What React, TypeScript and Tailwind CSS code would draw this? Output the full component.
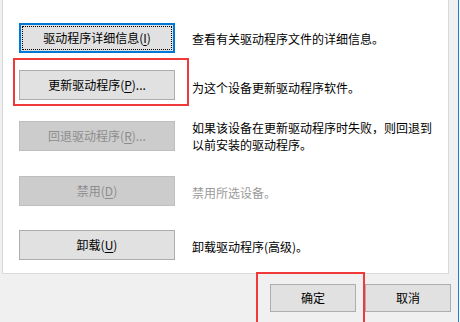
import React from 'react';

const font = "font-['Microsoft_YaHei','Noto_Sans_CJK_SC',sans-serif]";

function Mn({ k }: { k: string }) {
  return <span className="underline underline-offset-2">{k}</span>;
}

export default function App() {
  const btn = 'w-[156px] h-[30px] flex items-center justify-center text-[12px] leading-none box-border';
  const normal = 'bg-[#e1e1e1] border border-[#adadad] text-black';
  const disabled = 'bg-[#cccccc] border border-[#bfbfbf] text-[#8c8c8c]';

  return (
    <div className={`relative w-[460px] h-[322px] bg-[#f0f0f0] flex overflow-hidden ${font}`}>
      <div className="w-[458px] flex flex-col pl-[2px]">
        {/* property page */}
        <div className="w-[447px] h-[274px] bg-white border-x border-b border-[#d9d9d9] flex flex-col pl-4 pt-[23px]">
          <div className="flex items-center">
            <div className={`${btn} bg-[#e1e1e1] border-2 border-[#0078d7] p-px`}>
              <div className="w-full h-full outline outline-1 outline-dotted outline-black -outline-offset-1 flex items-center justify-center text-black">
                驱动程序详细信息(<Mn k="I" />)
              </div>
            </div>
            <p className="ml-[17px] text-[12px] leading-[17px] text-black">查看有关驱动程序文件的详细信息。</p>
          </div>

          <div className="flex items-center mt-[17px]">
            <div className="relative">
              <div className={`${btn} ${normal}`}>
                更新驱动程序(<Mn k="P" />)...
              </div>
              <div className="absolute left-[-6px] top-[-12px] w-[176px] h-[48px] border-2 border-[#f03a3a]" />
            </div>
            <p className="ml-[17px] pt-[4px] text-[12px] leading-[17px] text-black">为这个设备更新驱动程序软件。</p>
          </div>

          <div className="flex items-center mt-[19px]">
            <div className={`${btn} ${disabled}`}>
              回退驱动程序(<Mn k="R" />)...
            </div>
            <p className="ml-[17px] text-[12px] leading-[17px] text-black">
              如果该设备在更新驱动程序时失败，则回退到
              <br />
              以前安装的驱动程序。
            </p>
          </div>

          <div className="flex items-center mt-[23px]">
            <div className={`${btn} ${disabled}`}>
              禁用(<Mn k="D" />)
            </div>
            <p className="ml-[17px] pt-[3px] text-[12px] leading-[17px] text-[#9a9a9a]">禁用所选设备。</p>
          </div>

          <div className="flex items-center mt-[24px]">
            <div className={`${btn} ${normal}`}>
              卸载(<Mn k="U" />)
            </div>
            <p className="ml-[17px] pt-[2px] text-[12px] leading-[17px] text-black">卸载驱动程序(高级)。</p>
          </div>
        </div>

        {/* dialog buttons */}
        <div className="flex justify-end gap-[9px] pr-[7px] mt-[10px]">
          <div className="w-[86px] h-[28px] bg-[#e1e1e1] border border-[#adadad] flex items-center justify-center text-[12px] text-black">
            确定
          </div>
          <div className="w-[86px] h-[28px] bg-[#e1e1e1] border border-[#adadad] flex items-center justify-center text-[12px] text-black">
            取消
          </div>
        </div>
      </div>
      <div className="w-px bg-[#1883d7]" />
      <div className="w-px bg-white" />

      {/* annotation around OK */}
      <div className="absolute left-[256px] top-[272px] w-[109px] h-[60px] border-2 border-[#f03a3a]" />
    </div>
  );
}
